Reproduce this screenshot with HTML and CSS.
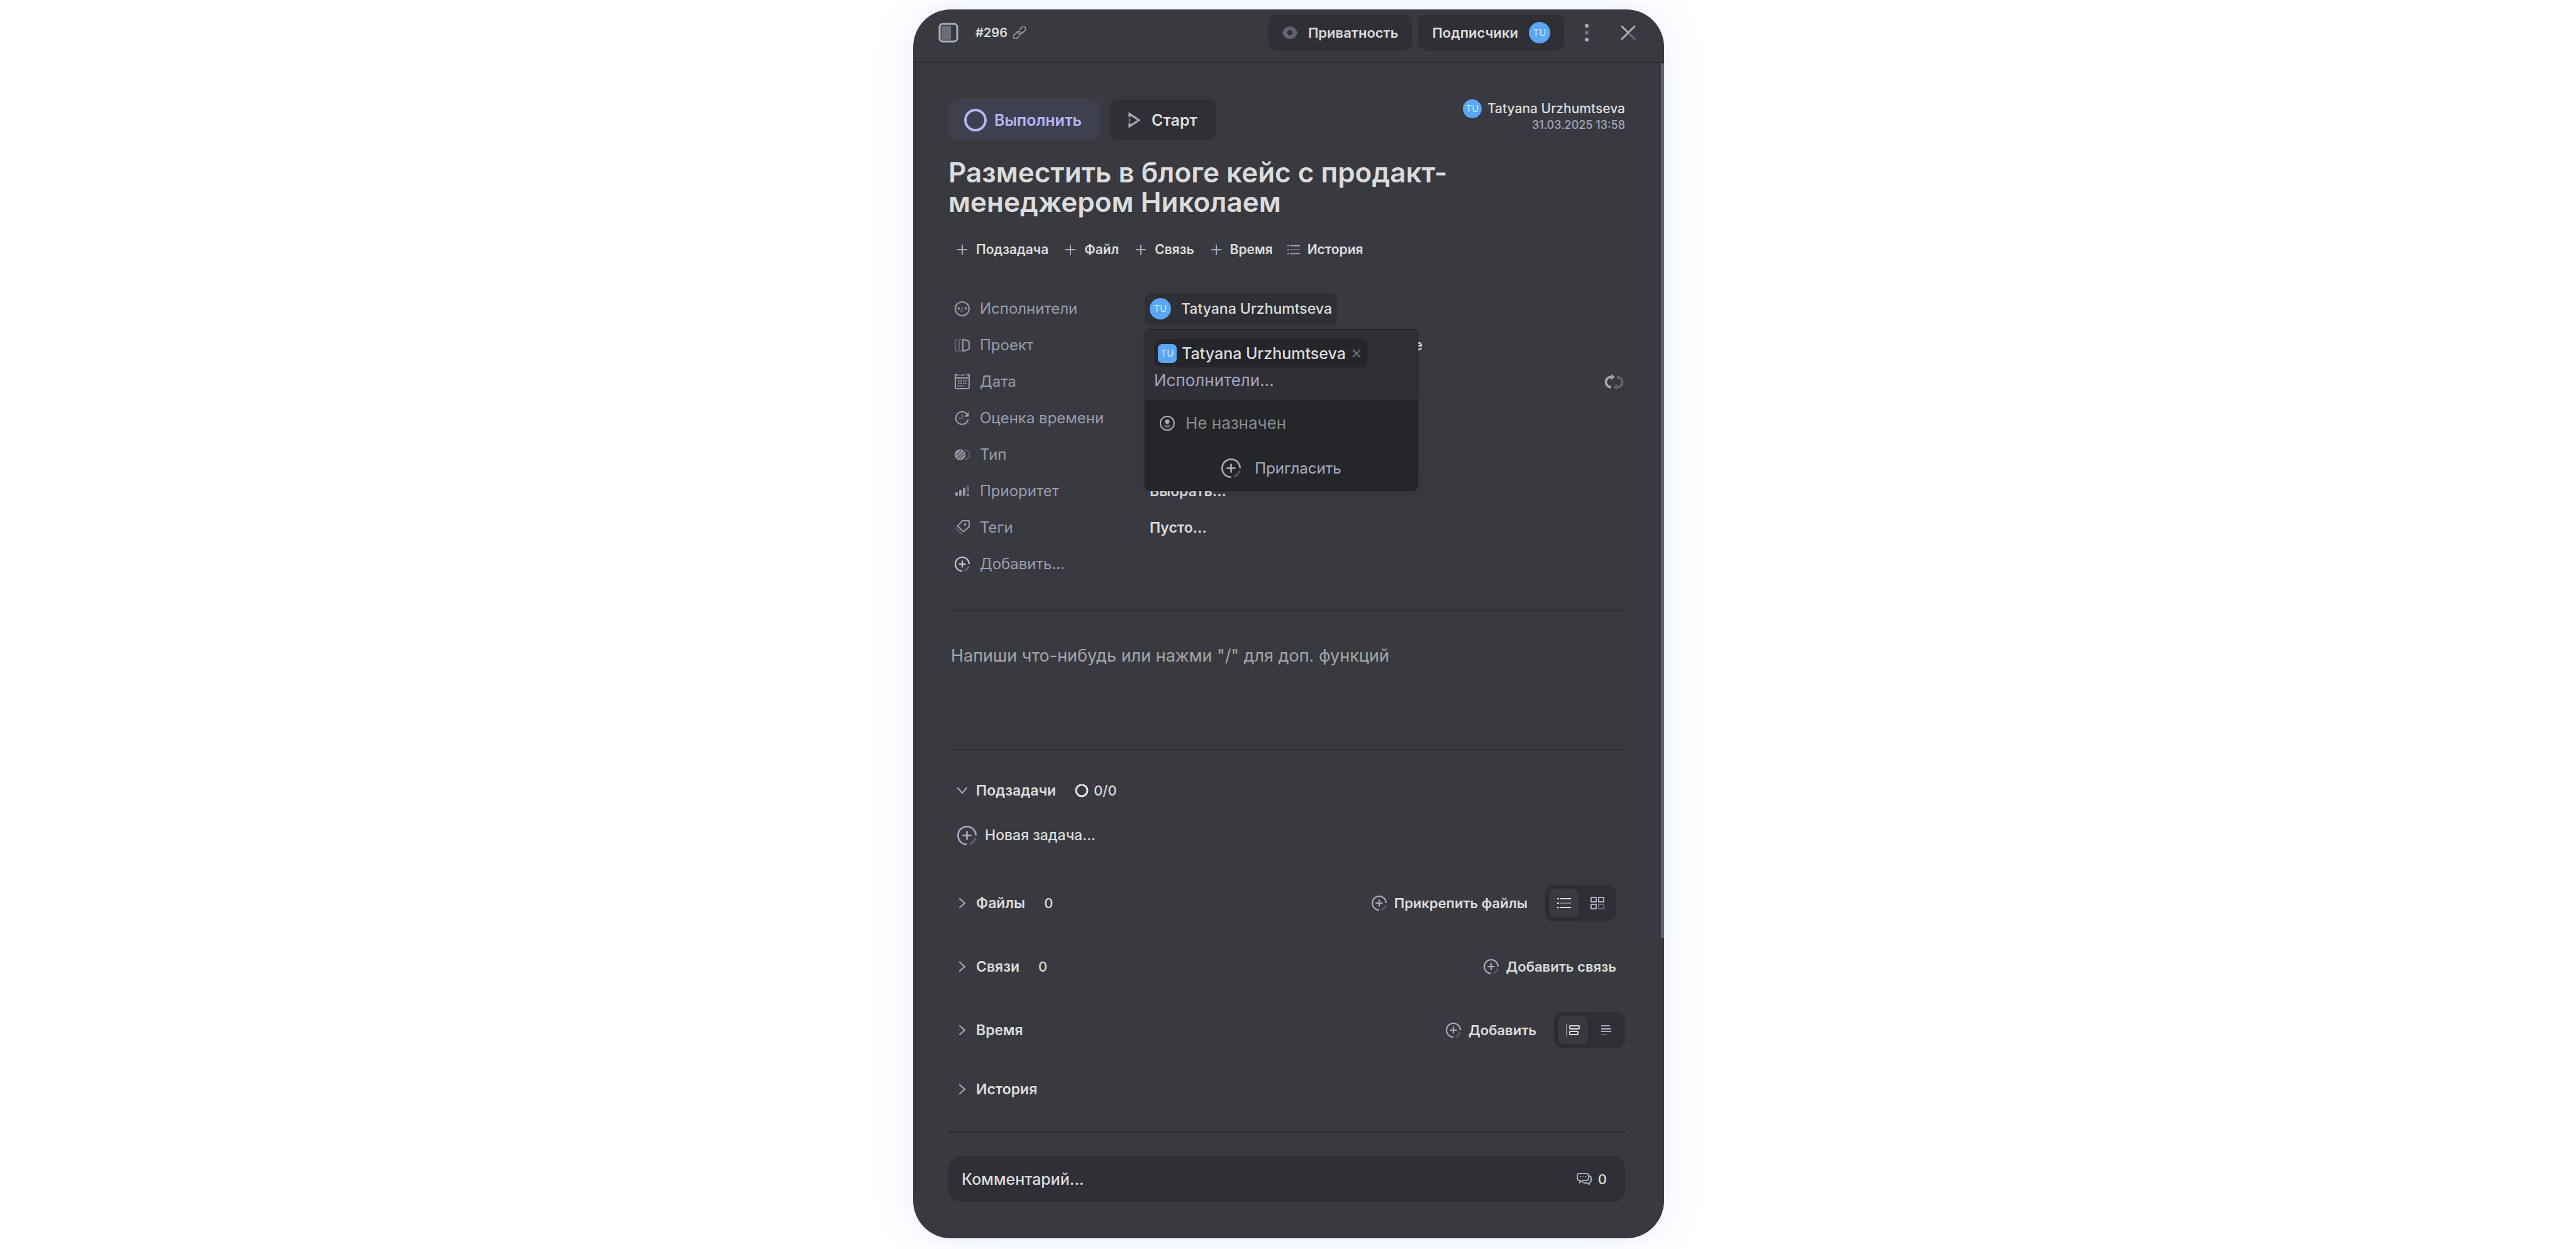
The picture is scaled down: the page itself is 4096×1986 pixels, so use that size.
FILE: index.html
```html
<!DOCTYPE html>
<html lang="ru">
<head>
    <meta charset="UTF-8">
    <meta name="viewport" content="width=device-width, initial-scale=1.0">
    <title>#296 Разместить в блоге кейс с продакт-менеджером Николаем</title>
    <link rel="stylesheet" href="styles.css">
</head>
<body>
    <!-- Shared icons -->
    <svg class="sprite" aria-hidden="true">
        <symbol id="icon-add" viewBox="0 0 24 24" fill="none">
            <path d="M12 23A11 11 0 1 1 23 12" stroke="currentColor" stroke-width="2"/>
            <path d="M22.500 15A11 11 0 0 1 15.500 22.500" stroke="currentColor" stroke-width="2" opacity=".4"/>
            <path d="M12 6.500v11M6.500 12h11" stroke="currentColor" stroke-width="2"/>
        </symbol>
        <symbol id="icon-plus" viewBox="0 0 16 16" fill="none">
            <path d="M8 0v16M0 8h16" stroke="currentColor" stroke-width="2"/>
        </symbol>
        <symbol id="icon-chevron" viewBox="0 0 16 16" fill="none" stroke-linecap="round">
            <path d="M4 1l8 7-8 7" stroke="currentColor" stroke-width="2"/>
        </symbol>
        <symbol id="icon-list" viewBox="0 0 22 22">
            <path d="M0 3h3v2H0zM0 10h3v2H0zM0 17h3v2H0zM5 3h17v2H5zM5 17h17v2H5z" fill="currentColor"/>
            <path d="M5 10h17v2H5z" fill="currentColor" opacity=".45"/>
        </symbol>
    </svg>

    <main class="card">
        <header class="header">
            <button class="icon-btn" type="button" aria-label="Боковая панель">
                <svg width="32" height="32" viewBox="0 0 32 32" fill="none">
                    <rect x="2" y="2" width="28" height="28" rx="5" stroke="#a9adc1" stroke-width="3"/>
                    <rect x="5" y="5" width="15" height="22" fill="#6b6e7a"/>
                </svg>
            </button>
            <a class="task-id" href="#296">#296
                <svg width="20" height="20" viewBox="0 0 20 20" fill="none" stroke="#a4a4a8" stroke-width="1.600" stroke-linecap="round">
                    <g transform="rotate(-45 10 10)">
                        <path d="M6 13.500H1a3.500 3.500 0 0 1 0-7h7.500a3.500 3.500 0 0 1 3 5"/>
                        <path d="M14 6.500h5a3.500 3.500 0 0 1 0 7h-7.500a3.500 3.500 0 0 1-3-5"/>
                    </g>
                </svg>
            </a>
            <div class="header-actions">
                <button class="btn" type="button">
                    <svg width="24" height="20" viewBox="0 0 24 20">
                        <path d="M12 0C6 0 2 4 0 10c2 6 6 10 12 10s10-4 12-10C22 4 18 0 12 0zm0 6a4 4 0 1 1 0 8 4 4 0 0 1 0-8z" fill="#62656d" fill-rule="evenodd"/>
                    </svg>
                    Приватность
                </button>
                <button class="btn" type="button">Подписчики <span class="avatar">TU</span></button>
                <button class="icon-btn menu" type="button" aria-label="Меню">
                    <svg width="8" height="28" viewBox="0 0 8 28" fill="#a9adc1">
                        <circle cx="4" cy="3" r="3"/>
                        <circle cx="4" cy="14" r="3" opacity=".5"/>
                        <circle cx="4" cy="25" r="3"/>
                    </svg>
                </button>
                <button class="icon-btn" type="button" aria-label="Закрыть">
                    <svg width="24" height="24" viewBox="0 0 24 24" fill="none" stroke="#a9adc1" stroke-width="3" stroke-linecap="round">
                        <path d="M22 2L2 22M2 2l9 9"/>
                        <path d="M14 14l8 8" opacity=".45"/>
                    </svg>
                </button>
            </div>
        </header>

        <div class="body">
            <div class="top">
                <div class="top-buttons">
                    <button class="btn btn-large btn-done" type="button">
                        <svg width="36" height="36" viewBox="0 0 36 36" fill="none"><circle cx="18" cy="18" r="16" stroke="currentColor" stroke-width="4"/></svg>
                        Выполнить
                    </button>
                    <button class="btn btn-large" type="button">
                        <svg width="20" height="26" viewBox="0 0 20 26" fill="none" stroke="#a9adc1" stroke-width="3">
                            <path d="M2 8V3l15 10L2 23v-5"/>
                            <path d="M2 10v6" opacity=".4"/>
                        </svg>
                        Старт
                    </button>
                </div>
                <div class="author">
                    <div class="author-name"><span class="avatar avatar-small">TU</span>Tatyana Urzhumtseva</div>
                    <time datetime="2025-03-31T13:58">31.03.2025 13:58</time>
                </div>
            </div>

            <h1>Разместить в блоге кейс с продакт-менеджером Николаем</h1>

            <nav class="quick">
                <button type="button"><svg width="16" height="16"><use href="#icon-plus"/></svg>Подзадача</button>
                <button type="button"><svg width="16" height="16"><use href="#icon-plus"/></svg>Файл</button>
                <button type="button"><svg width="16" height="16"><use href="#icon-plus"/></svg>Связь</button>
                <button type="button"><svg width="16" height="16"><use href="#icon-plus"/></svg>Время</button>
                <button class="quick-history" type="button"><svg width="20" height="20"><use href="#icon-list"/></svg>История</button>
            </nav>

            <div class="props">
                <div class="prop">
                    <span class="prop-name">
                        <svg width="24" height="24" viewBox="0 0 24 24" fill="none" stroke="currentColor" stroke-width="2">
                            <circle cx="12" cy="12" r="11"/>
                            <circle cx="6.500" cy="11.500" r="1.500" fill="currentColor" stroke-width="1"/>
                            <circle cx="17.500" cy="11.500" r="1.500" fill="currentColor" stroke-width="1"/>
                            <path d="M12.500 8.500L10 15.500h4" opacity=".45"/>
                        </svg>
                        Исполнители
                    </span>
                    <div class="picker">
                        <button class="assignee" type="button"><span class="avatar">TU</span>Tatyana Urzhumtseva</button>
                        <div class="popup">
                            <div class="popup-search">
                                <span class="chip">
                                    <span class="avatar avatar-square">TU</span>
                                    Tatyana Urzhumtseva
                                    <button class="icon-btn chip-remove" type="button" aria-label="Убрать">
                                        <svg width="14" height="14" viewBox="0 0 14 14" fill="none" stroke="#6f717a" stroke-width="2"><path d="M1 1l12 12M13 1L1 13"/></svg>
                                    </button>
                                </span>
                                <input type="text" placeholder="Исполнители..." aria-label="Исполнители">
                            </div>
                            <button class="popup-item" type="button">
                                <svg width="24" height="24" viewBox="0 0 24 24" fill="none">
                                    <circle cx="12" cy="12" r="11" stroke="#a9adc1" stroke-width="2"/>
                                    <circle cx="12" cy="9.500" r="3.500" fill="#a9adc1"/>
                                    <ellipse cx="12" cy="16.500" rx="5" ry="2.500" fill="#62656d"/>
                                </svg>
                                Не назначен
                            </button>
                            <button class="popup-invite" type="button"><svg width="31" height="31"><use href="#icon-add"/></svg>Пригласить</button>
                        </div>
                    </div>
                </div>
                <div class="prop">
                    <span class="prop-name">
                        <svg width="24" height="24" viewBox="0 0 24 24" fill="none" stroke="currentColor" stroke-width="2">
                            <path d="M5 3H3Q1 3 1 5v14q0 2 2 2h2M11 3H9Q7 3 7 5v14q0 2 2 2h2" opacity=".45"/>
                            <path d="M13 4q0-2 2-1l6 2q2 .500 2 2v10q0 1.500-2 2l-6 2q-2 1-2-1z"/>
                        </svg>
                        Проект
                    </span>
                    <span class="prop-value prop-value-wide">е</span>
                </div>
                <div class="prop">
                    <span class="prop-name">
                        <svg width="24" height="24" viewBox="0 0 24 24" fill="none" stroke="currentColor" stroke-width="2">
                            <path d="M5 1H1v19q0 3 3 3h16q3 0 3-3V1h-4M1 6h22M9.500 1.500h5"/>
                            <path d="M7.200 0v3M16.800 0v3" opacity=".45"/>
                            <path d="M5 10.500h14M5 14.500h14M5 18.500h10" stroke-dasharray="2.500 1.500"/>
                        </svg>
                        Дата
                    </span>
                    <button class="icon-btn repeat" type="button" aria-label="Повтор">
                        <svg width="31" height="25" viewBox="0 0 31 25" fill="none" stroke-width="4">
                            <path d="M11 20.500A8 8 0 0 1 10 4.500h3" stroke="#a4a5a9"/>
                            <path d="M11 0l6 4.500L11 9z" fill="#a4a5a9"/>
                            <path d="M20 4.500a8 8 0 0 1 1 16h-3" stroke="#636469"/>
                            <path d="M20 16l-6 4.500 6 4.500z" fill="#636469"/>
                        </svg>
                    </button>
                </div>
                <div class="prop">
                    <span class="prop-name">
                        <svg width="24" height="24" viewBox="0 0 24 24" fill="none" stroke="currentColor" stroke-width="2">
                            <path d="M20 6A10 10 0 1 0 21.500 14"/>
                            <path d="M22.500 2v7.500H15z" fill="currentColor" stroke="none"/>
                            <path d="M12 6v6H6" opacity=".45"/>
                        </svg>
                        Оценка времени
                    </span>
                </div>
                <div class="prop">
                    <span class="prop-name">
                        <svg width="24" height="24" viewBox="0 0 24 24" fill="none">
                            <circle cx="8.500" cy="12" r="8.500" fill="currentColor"/>
                            <path d="M2.500 13L10 5.500M4.500 17L14 7.500M7.500 19l7.500-7.500" stroke="#393a3f" stroke-width="1.500"/>
                            <path d="M16 4.500a7.500 7.500 0 0 1 0 15" stroke="currentColor" stroke-width="2" opacity=".4"/>
                        </svg>
                        Тип
                    </span>
                </div>
                <div class="prop">
                    <span class="prop-name">
                        <svg width="24" height="24" viewBox="0 0 24 24" fill="currentColor">
                            <rect x="1" y="13.500" width="4" height="6" rx="1.500"/>
                            <rect x="7" y="10" width="4" height="9.500" rx="1.500"/>
                            <rect x="13" y="6.500" width="4" height="13" rx="1.500"/>
                            <rect x="19" y="16" width="4" height="3.500" rx="1.500"/>
                            <rect x="19" y="2.500" width="4" height="11" rx="1.500" opacity=".45"/>
                        </svg>
                        Приоритет
                    </span>
                    <span class="prop-value">Выбрать...</span>
                </div>
                <div class="prop">
                    <span class="prop-name">
                        <svg width="24" height="24" viewBox="0 0 24 24" fill="none" stroke="currentColor" stroke-width="2">
                            <path d="M12.500 1H23v9.500L14 18.500 4.500 9.500z" stroke-linejoin="round"/>
                            <circle cx="16.500" cy="7" r="1.500" fill="currentColor" stroke-width="1"/>
                            <path d="M1 12l10.500 10.500" opacity=".45"/>
                        </svg>
                        Теги
                    </span>
                    <span class="prop-value">Пусто...</span>
                </div>
                <button class="prop prop-name prop-add" type="button"><svg width="24" height="24"><use href="#icon-add"/></svg>Добавить...</button>
            </div>

            <textarea class="description" placeholder='Напиши что-нибудь или нажми "/" для доп. функций' aria-label="Описание"></textarea>

            <section class="section section-subtasks">
                <button class="section-title" type="button" aria-expanded="true"><svg class="open" width="16" height="16"><use href="#icon-chevron"/></svg>Подзадачи</button>
                <span class="progress">
                    <svg width="22" height="22" viewBox="0 0 22 22" fill="none" stroke-width="3">
                        <circle cx="11" cy="11" r="9" stroke="#e4e4e8"/>
                        <path d="M9.500 2h3" stroke="#a9adf5"/>
                    </svg>
                    0/0
                </span>
            </section>
            <button class="new-task" type="button"><svg width="31" height="31"><use href="#icon-add"/></svg>Новая задача...</button>

            <section class="section">
                <button class="section-title" type="button"><svg width="16" height="16"><use href="#icon-chevron"/></svg>Файлы</button>
                <span class="count">0</span>
                <div class="section-actions section-actions-inset">
                    <button class="add" type="button"><svg width="24" height="24"><use href="#icon-add"/></svg>Прикрепить файлы</button>
                    <div class="toggle">
                        <button class="active" type="button" aria-label="Список"><svg width="22" height="22"><use href="#icon-list"/></svg></button>
                        <button type="button" aria-label="Плитка">
                            <svg width="22" height="22" viewBox="0 0 22 22" fill="none" stroke="currentColor" stroke-width="2">
                                <path d="M1 2h8v7H1zM13 2h8v7h-8zM1 13h8v7H1z"/>
                                <path d="M13 13h8v7h-8z" opacity=".45"/>
                            </svg>
                        </button>
                    </div>
                </div>
            </section>

            <section class="section">
                <button class="section-title" type="button"><svg width="16" height="16"><use href="#icon-chevron"/></svg>Связи</button>
                <span class="count">0</span>
                <div class="section-actions section-actions-inset">
                    <button class="add" type="button"><svg width="24" height="24"><use href="#icon-add"/></svg>Добавить связь</button>
                </div>
            </section>

            <section class="section section-time">
                <button class="section-title" type="button"><svg width="16" height="16"><use href="#icon-chevron"/></svg>Время</button>
                <div class="section-actions">
                    <button class="add" type="button"><svg width="24" height="24"><use href="#icon-add"/></svg>Добавить</button>
                    <div class="toggle">
                        <button class="active" type="button" aria-label="Шкала">
                            <svg width="22" height="22" viewBox="0 0 22 22" fill="none" stroke="currentColor" stroke-width="2">
                                <path d="M1 1v20" opacity=".45"/>
                                <rect x="6" y="4" width="15" height="5" rx="1"/>
                                <rect x="6" y="13" width="13" height="5" rx="1"/>
                            </svg>
                        </button>
                        <button type="button" aria-label="Строки">
                            <svg width="22" height="22" viewBox="0 0 22 22" fill="none" stroke="currentColor" stroke-width="2">
                                <path d="M3 4h14M3 9h16M3 13h16"/>
                                <path d="M3 18h9" opacity=".45"/>
                            </svg>
                        </button>
                    </div>
                </div>
            </section>

            <section class="section section-history">
                <button class="section-title" type="button"><svg width="16" height="16"><use href="#icon-chevron"/></svg>История</button>
            </section>

            <footer class="footer">
                <div class="comment">
                    <input type="text" placeholder="Комментарий..." aria-label="Комментарий">
                    <svg width="24" height="20" viewBox="0 0 24 20" fill="none" stroke="#a9adc1" stroke-width="2">
                        <path d="M4 1h11q4 0 4 4v3q0 4-4 4H9l-4 3v-3q-4 0-4-4V5q0-4 3-4z"/>
                        <path d="M20 5q3 0 3 3v4q0 3-3 4v2l-4-2h-4l-3-2"/>
                        <path d="M5 6h2M13 6h2"/>
                        <path d="M9 6h2" opacity=".45"/>
                    </svg>
                    <span>0</span>
                </div>
            </footer>
        </div>
        <div class="scrollbar"></div>
    </main>
</body>
</html>
```
FILE: styles.css
```css
* {
    box-sizing: border-box;
}
body {
    margin: 0;
    padding: 15px 20px 17px 22px;
    min-height: 100vh;
    display: flex;
    justify-content: center;
    background: #fff;
    font: 500 21px/28px Inter, sans-serif;
    color: #dcdcdc;
}
button, input, textarea {
    font: inherit;
    color: inherit;
    background: none;
    border: 0;
    padding: 0;
    margin: 0;
    outline: none;
}
button {
    display: flex;
    align-items: center;
    white-space: nowrap;
    cursor: pointer;
}
svg {
    display: block;
    flex: none;
}
.sprite {
    position: absolute;
    width: 0;
    height: 0;
}

.card {
    position: relative;
    width: 100%;
    max-width: 1194px;
    display: flex;
    flex-direction: column;
    background: #393a3f;
    border-radius: 60px;
    box-shadow: 0 0 80px #e6edff;
}
.scrollbar {
    position: absolute;
    top: 85px;
    right: 0;
    width: 5px;
    height: 1392px;
    border-radius: 3px;
    background: #62656d;
}

/* Header */
.header {
    display: flex;
    align-items: center;
    height: 85px;
    padding: 0 45px 9px 40px;
    border-bottom: 2px solid #2d2e30;
    font-weight: 600;
}
.task-id {
    display: flex;
    align-items: center;
    gap: 9px;
    margin-left: 27px;
    font-size: 20px;
    color: inherit;
    text-decoration: none;
}
.header-actions {
    display: flex;
    align-items: center;
    gap: 10px;
    margin-left: auto;
}
.btn {
    height: 58px;
    padding: 0 22px;
    gap: 17px;
    border-radius: 14px;
    background: #2f3035;
    font-size: 22px;
    font-weight: 600;
}
.menu {
    margin: 0 40px 0 22px;
}
.avatar {
    display: flex;
    align-items: center;
    justify-content: center;
    width: 34px;
    height: 34px;
    border-radius: 50%;
    background: #5aa7f8;
    color: #d5e8fc;
    font-size: 15px;
    font-weight: 400;
}
.avatar-small {
    width: 30px;
    height: 30px;
}
.avatar-square {
    width: 30px;
    height: 30px;
    border-radius: 7px;
}

/* Task */
.body {
    flex: 1;
    display: flex;
    flex-direction: column;
    padding: 58px 62px 58px 56px;
}
.top {
    display: flex;
    justify-content: space-between;
}
.top-buttons {
    display: flex;
    gap: 14px;
}
.btn-large {
    height: 65px;
    padding: 0 30px;
    font-size: 25px;
}
.btn-done {
    padding: 0 30px 0 25px;
    gap: 12px;
    background: #3e4050;
    color: #b5b6f8;
}
.author {
    display: flex;
    flex-direction: column;
    align-items: flex-end;
}
.author-name {
    display: flex;
    align-items: center;
    gap: 9px;
}
.author time {
    line-height: 22px;
    font-size: 18px;
    color: #a3a5bd;
}
h1 {
    max-width: 900px;
    margin: 28px 0 0;
    font-size: 44px;
    line-height: 47px;
    font-weight: 600;
}
.quick {
    display: flex;
    gap: 27px;
    margin: 38px 0 0 14px;
}
.quick button {
    gap: 14px;
    font-weight: 600;
}
.quick .quick-history {
    gap: 12px;
    margin-left: -4px;
}
.quick svg {
    color: #a9adc1;
}

/* Properties */
.props {
    display: flex;
    flex-direction: column;
    margin-top: 51px;
    padding: 0 0 44px;
    border-bottom: 2px solid #2a2b2d;
}
.prop {
    display: flex;
    align-items: center;
    height: 58px;
    padding-left: 10px;
}
.prop-name {
    display: flex;
    align-items: center;
    gap: 16px;
    width: 310px;
    font-size: 24px;
    font-weight: 400;
    color: #9a9cb1;
}
.prop-value {
    font-weight: 600;
    font-size: 23px;
}
.prop-value-wide {
    width: 434px;
    text-align: right;
}
.prop-add svg {
    color: #c4c6dc;
}
.repeat {
    margin: 0 2px 0 auto;
}
.picker {
    position: relative;
    margin-left: -8px;
}
.assignee {
    height: 50px;
    padding: 0 8px;
    gap: 16px;
    border-radius: 10px;
    background: #2f3035;
    font-size: 23px;
}
.popup {
    position: absolute;
    top: 57px;
    left: 0;
    z-index: 1;
    width: 435px;
    overflow: hidden;
    border: 1px solid #1a1b1d;
    border-radius: 10px;
    background: #25262a;
    box-shadow: 0 4px 20px rgba(0, 0, 0, .1);
    font-size: 25px;
}
.popup-search {
    padding: 15px 14px 12px;
    background: #2f3035;
}
.chip {
    display: inline-flex;
    align-items: center;
    height: 45px;
    padding: 0 10px 0 6px;
    gap: 8px;
    border-radius: 10px;
    background: #25262a;
    white-space: nowrap;
}
.chip-remove {
    margin-left: 2px;
}
.popup-search input {
    display: block;
    width: 100%;
    height: 40px;
    font-size: 26px;
    font-weight: 400;
}
.popup-search input::placeholder {
    color: #a3a5c3;
    opacity: 1;
}
.popup-item {
    width: 100%;
    height: 73px;
    padding-left: 23px;
    gap: 17px;
    font-size: 26px;
    font-weight: 400;
    color: #8b8b8b;
}
.popup-invite {
    justify-content: center;
    width: 100%;
    height: 71px;
    gap: 22px;
    font-size: 24px;
    font-weight: 400;
    color: #a9adc1;
}

/* Description */
.description {
    height: 220px;
    padding: 57px 4px 0;
    resize: none;
    border-bottom: 1px solid #2a2b2d;
    font-size: 27px;
    font-weight: 400;
}
.description::placeholder {
    color: #a6a6a6;
    opacity: 1;
}

/* Sections */
.section {
    display: flex;
    align-items: center;
    height: 58px;
    margin-bottom: 43px;
    padding-left: 14px;
    font-size: 22px;
}
.section-title {
    gap: 14px;
    font-size: 23px;
    font-weight: 600;
}
.section-title svg {
    color: #a9adc1;
}
.open {
    transform: rotate(90deg);
}
.section-subtasks {
    margin: 36px 0 13px;
}
.section-time {
    margin-bottom: 36px;
}
.section-history {
    margin-bottom: 38px;
}
.progress {
    display: flex;
    align-items: center;
    gap: 8px;
    margin-left: 30px;
}
.count {
    margin-left: 30px;
}
.new-task {
    height: 58px;
    margin: 0 0 50px 14px;
    gap: 13px;
    font-size: 23px;
}
.new-task svg, .add svg {
    color: #a9adc1;
}
.section-actions {
    display: flex;
    align-items: center;
    gap: 28px;
    margin-left: auto;
}
.section-actions-inset {
    margin-right: 14px;
}
.add {
    gap: 12px;
    font-size: 22px;
    font-weight: 600;
}
.toggle {
    display: flex;
    gap: 5px;
    padding: 6px;
    border-radius: 14px;
    background: #2f3035;
    color: #a9adc1;
}
.toggle button {
    justify-content: center;
    width: 48px;
    height: 46px;
    border-radius: 10px;
}
.toggle .active {
    background: #393a3f;
    color: #dcdcdc;
    box-shadow: 0 1px 6px rgba(0, 0, 0, .2);
}

/* Comment */
.footer {
    margin-top: auto;
    padding-top: 37px;
    border-top: 2px solid #2b2c2d;
}
.comment {
    display: flex;
    align-items: center;
    height: 73px;
    padding: 0 28px 0 20px;
    gap: 10px;
    border: 1px solid #2c2d31;
    border-radius: 20px;
    background: #2f3035;
    font-size: 22px;
}
.comment input {
    flex: 1;
    min-width: 0;
    font-size: 25px;
}
.comment input::placeholder {
    color: #dcdcdc;
    opacity: 1;
}
```
